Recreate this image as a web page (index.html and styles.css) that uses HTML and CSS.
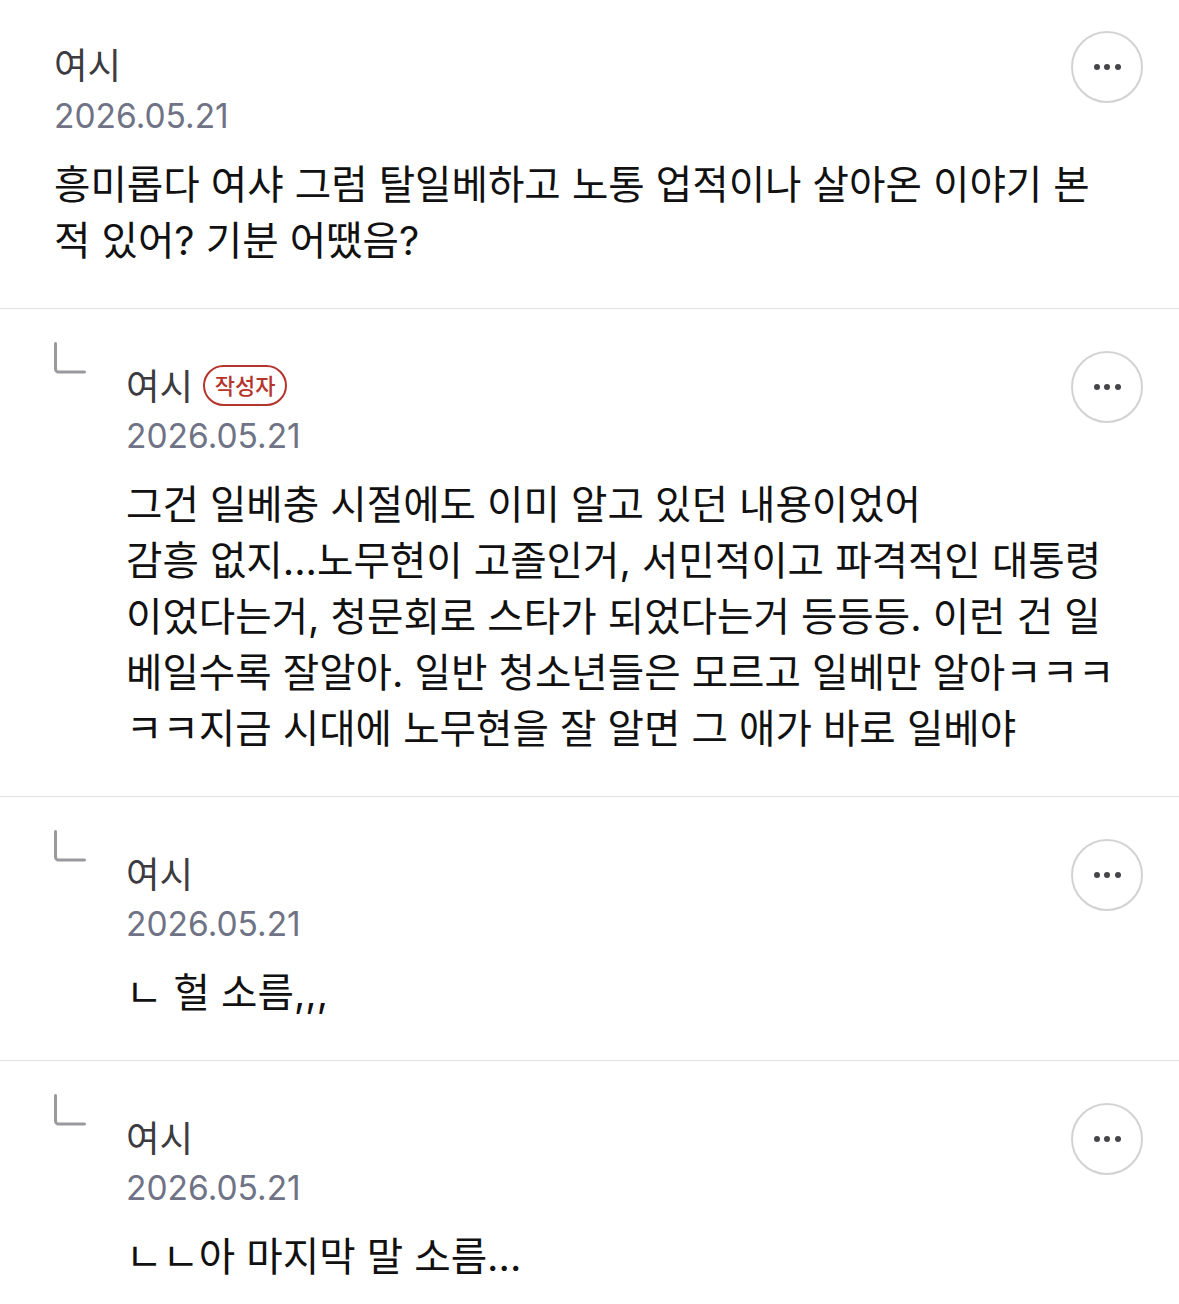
FILE: index.html
```html
<!DOCTYPE html>
<html lang="ko">
<head>
    <meta charset="UTF-8">
    <title>댓글</title>
    <link rel="stylesheet" href="styles.css">
</head>
<body>
    <div class="comment">
        <div class="comment-body">
            <div class="name-row"><span class="name">여시</span></div>
            <div class="date">2026.05.21</div>
            <p class="text">흥미롭다 여샤 그럼 탈일베하고 노통 업적이나 살아온 이야기 본<br>적 있어? 기분 어땠음?</p>
        </div>
        <button class="more"><i></i><i></i><i></i></button>
    </div>

    <div class="comment reply">
        <svg class="reply-mark" width="32" height="32" viewBox="0 0 32 32"><path d="M1.500 1.500V27a3 3 0 0 0 3 3H30.500"/></svg>
        <div class="comment-body">
            <div class="name-row"><span class="name">여시</span><span class="badge">작성자</span></div>
            <div class="date">2026.05.21</div>
            <p class="text">그건 일베충 시절에도 이미 알고 있던 내용이었어<br>감흥 없지...노무현이 고졸인거, 서민적이고 파격적인 대통령<br>이었다는거, 청문회로 스타가 되었다는거 등등등. 이런 건 일<br>베일수록 잘알아. 일반 청소년들은 모르고 일베만 알아ㅋㅋㅋ<br>ㅋㅋ지금 시대에 노무현을 잘 알면 그 애가 바로 일베야</p>
        </div>
        <button class="more"><i></i><i></i><i></i></button>
    </div>

    <div class="comment reply">
        <svg class="reply-mark" width="32" height="32" viewBox="0 0 32 32"><path d="M1.500 1.500V27a3 3 0 0 0 3 3H30.500"/></svg>
        <div class="comment-body">
            <div class="name-row"><span class="name">여시</span></div>
            <div class="date">2026.05.21</div>
            <p class="text">ㄴ 헐 소름,,,</p>
        </div>
        <button class="more"><i></i><i></i><i></i></button>
    </div>

    <div class="comment reply">
        <svg class="reply-mark" width="32" height="32" viewBox="0 0 32 32"><path d="M1.500 1.500V27a3 3 0 0 0 3 3H30.500"/></svg>
        <div class="comment-body">
            <div class="name-row"><span class="name">여시</span></div>
            <div class="date">2026.05.21</div>
            <p class="text">ㄴㄴ아 마지막 말 소름...</p>
        </div>
        <button class="more"><i></i><i></i><i></i></button>
    </div>
</body>
</html>
```

FILE: styles.css
```css
body {
    margin: 0;
    background: #fff;
    font-family: "Inter", "Noto Sans CJK KR", sans-serif;
    overflow: hidden;
}

.comment {
    display: flex;
    align-items: flex-start;
    padding: 31px 36px 39px 54px;
    border-bottom: 1px solid #e2e2e4;
}

.comment.reply {
    padding-top: 42px;
}

.comment:last-child {
    border-bottom: none;
}

.reply-mark {
    flex: none;
    margin-right: 40px;
    margin-top: -9px;
    fill: none;
    stroke: #9a9a9e;
    stroke-width: 3;
    stroke-linecap: round;
}

.comment-body {
    flex: 1;
    min-width: 0;
}

.name-row {
    display: flex;
    align-items: center;
    gap: 10px;
    height: 42px;
    margin-top: 11px;
}

.reply .name-row {
    margin-top: 12px;
}

.name {
    font-size: 36.500px;
    color: #3c3c40;
}

.badge {
    height: 41px;
    width: 84px;
    margin-top: 3px;
    box-sizing: border-box;
    border: 2px solid #b5342c;
    border-radius: 21px;
    color: #b5342c;
    font-size: 22px;
    font-weight: 500;
    line-height: 39px;
    text-align: center;
}

.date {
    margin-top: 12px;
    font-size: 33.500px;
    line-height: 40px;
    color: #6f7385;
}

.reply .date {
    margin-top: 11px;
}

.text {
    margin: 21px 0 0;
    font-size: 39.600px;
    line-height: 56px;
    color: #111;
    white-space: nowrap;
}

.more {
    flex: none;
    display: flex;
    align-items: center;
    justify-content: center;
    gap: 4.500px;
    width: 72px;
    height: 72px;
    padding: 0;
    background: #fff;
    border: 2px solid #d2d2d2;
    border-radius: 50%;
}

.more i {
    width: 6px;
    height: 6px;
    border-radius: 50%;
    background: #45454a;
}
```
